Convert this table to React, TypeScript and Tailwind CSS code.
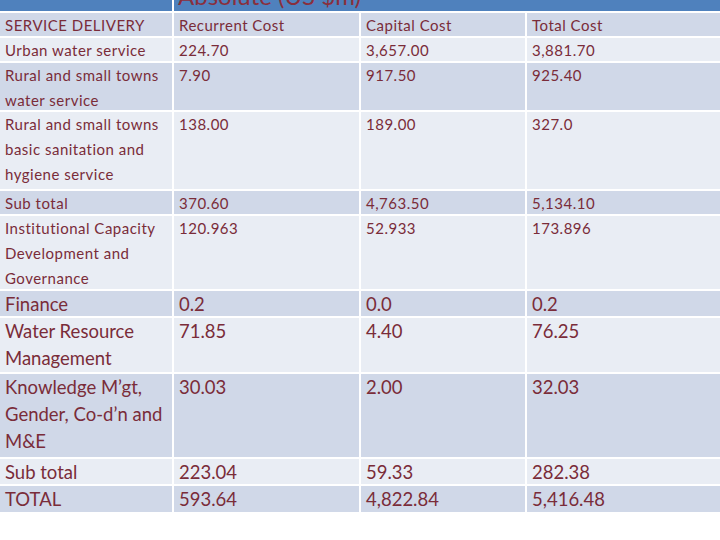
import React from "react";

type Row = {
  cells: string[];
  h: string;
  dark: boolean;
  big?: boolean;
};

const rows: Row[] = [
  { cells: ["SERVICE DELIVERY", "Recurrent Cost", "Capital Cost", "Total Cost"], h: "h-[23px]", dark: true },
  { cells: ["Urban water service", "224.70", "3,657.00", "3,881.70"], h: "h-[23px]", dark: false },
  { cells: ["Rural and small towns water service", "7.90", "917.50", "925.40"], h: "h-[47px]", dark: true },
  { cells: ["Rural and small towns basic sanitation and hygiene service", "138.00", "189.00", "327.0"], h: "h-[77px]", dark: false },
  { cells: ["Sub total", "370.60", "4,763.50", "5,134.10"], h: "h-[23px]", dark: true },
  { cells: ["Institutional Capacity Development and Governance", "120.963", "52.933", "173.896"], h: "h-[73px]", dark: false },
  { cells: ["Finance", "0.2", "0.0", "0.2"], h: "h-[25px]", dark: true, big: true },
  { cells: ["Water Resource Management", "71.85", "4.40", "76.25"], h: "h-[54px]", dark: false, big: true },
  { cells: ["Knowledge M\u2019gt, Gender, Co-d\u2019n and M&E", "30.03", "2.00", "32.03"], h: "h-[83px]", dark: true, big: true },
  { cells: ["Sub total", "223.04", "59.33", "282.38"], h: "h-[25px]", dark: false, big: true },
  { cells: ["TOTAL", "593.64", "4,822.84", "5,416.48"], h: "h-[26px]", dark: true, big: true },
];

export default function App() {
  return (
    <div className="w-[720px] h-[540px] bg-white overflow-hidden font-['Lato',sans-serif] text-[#7a2c39]">
      <div className="grid grid-cols-[172px_185px_164px_193px] gap-x-[2px] gap-y-[2px]">
        <div className="h-[11px] bg-[#4f81bd]" />
        <div className="col-span-3 h-[11px] bg-[#4f81bd] overflow-hidden pl-[4px]">
          <div className="-mt-[18px] text-[24px] leading-[28px] text-[#8a2f3c]">Absolute (US $m)</div>
        </div>
        {rows.map((r, i) =>
          r.cells.map((c, j) => (
            <div
              key={i + "-" + j}
              className={`${r.h} ${r.dark ? "bg-[#d0d8e8]" : "bg-[#e9edf4]"} ${
                r.big ? "text-[18.5px] leading-[27px]" : "text-[15px] leading-[25px] tracking-[0.5px]"
              } px-[5px] overflow-hidden`}
            >
              {c}
            </div>
          ))
        )}
      </div>
    </div>
  );
}
